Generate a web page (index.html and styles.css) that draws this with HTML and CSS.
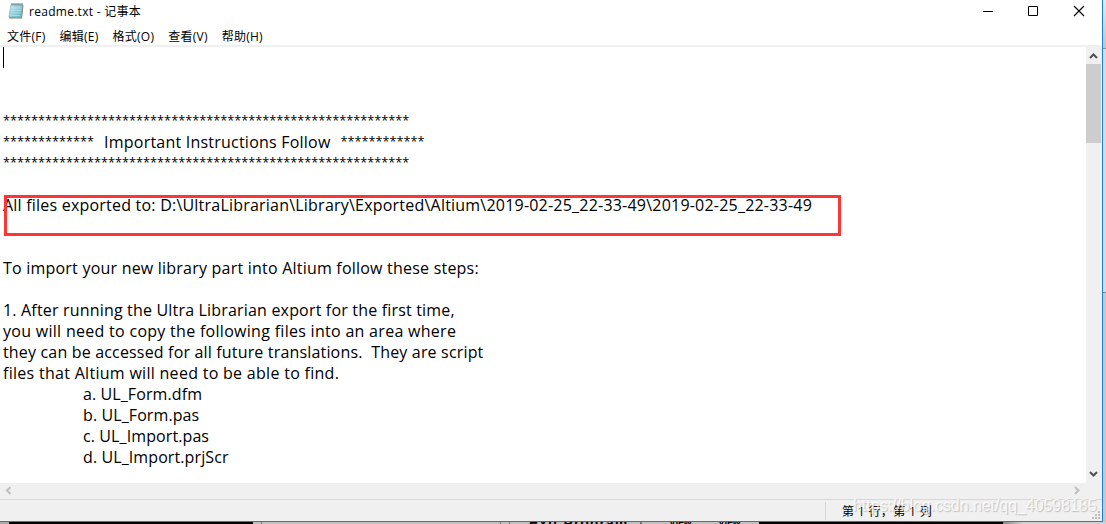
FILE: index.html
```html
<!DOCTYPE html>
<html lang="zh-CN">
<head>
  <meta charset="UTF-8">
  <title>readme.txt - 记事本</title>
  <link rel="stylesheet" href="styles.css">
</head>
<body>
<div class="desktop">
  <div class="window">
    <div class="title-bar">
      <svg class="icon" width="16" height="18" viewBox="0 0 16 18">
        <defs>
          <linearGradient id="paper" x1="0" y1="0" x2="1" y2="1">
            <stop offset="0" stop-color="#c9eef5"/>
            <stop offset="1" stop-color="#56abc0"/>
          </linearGradient>
        </defs>
        <path d="M14 3l1.5.5-1.5 13H1.5L1 15.5z" fill="#8b8067"/>
        <path d="M3 2.5h11.5L13 15.8.8 15z" fill="url(#paper)" stroke="#80b6c3" stroke-width=".6"/>
        <path d="M3.5 6h10M3.2 8.5h10M2.8 11h10M2.4 13.5h10" stroke="#d5f1f5" stroke-width=".5"/>
        <path d="M4 1v2.5M6 1v2.5M8 1v2.5M10 1v2.5M12 1v2.5M14 1v2.5" stroke="#5b6b70" stroke-width=".9"/>
      </svg>
      <span class="title">readme.txt - 记事本</span>
      <div class="controls">
        <svg width="46" height="22"><path d="M11 11.5h10" stroke="#000"/></svg>
        <svg width="46" height="22"><path d="M10.5 6.5h9v9h-9z" fill="none" stroke="#000"/></svg>
        <svg width="46" height="22"><path d="M10 6l10 10M20 6L10 16" stroke="#000" stroke-width="1.1"/></svg>
      </div>
    </div>
    <div class="menu">
      <span class="item">文件(F)</span>
      <span class="item">编辑(E)</span>
      <span class="item">格式(O)</span>
      <span class="item">查看(V)</span>
      <span class="item">帮助(H)</span>
    </div>
    <div class="main">
      <div class="editor">
        <div class="caret"></div>
        <div class="line"></div>
        <div class="line"></div>
        <div class="line"></div>
        <div class="line"><span class="star">**********************************************************</span></div>
        <div class="line"><span class="star">*************</span><span class="heading">Important Instructions Follow</span><span class="star">************</span></div>
        <div class="line"><span class="star">**********************************************************</span></div>
        <div class="line"></div>
        <div class="line path">All files exported to: D:\UltraLibrarian\Library\Exported\Altium\2019-02-25_22-33-49\2019-02-25_22-33-49</div>
        <div class="line"></div>
        <div class="line"></div>
        <div class="line path">To import your new library part into Altium follow these steps:</div>
        <div class="line"></div>
        <div class="line">1. After running the Ultra Librarian export for the first time,</div>
        <div class="line wide">you will need to copy the following files into an area where</div>
        <div class="line narrow">they can be accessed for all future translations.  They are script</div>
        <div class="line wide">files that Altium will need to be able to find.</div>
        <div class="line tab">a. UL_Form.dfm</div>
        <div class="line tab">b. UL_Form.pas</div>
        <div class="line tab">c. UL_Import.pas</div>
        <div class="line tab">d. UL_Import.prjScr</div>
        <div class="mark"></div>
      </div>
      <div class="scroll-y">
        <svg width="15" height="17"><path d="M4 11l3.5-3.5L11 11" fill="none" stroke="#505050" stroke-width="2"/></svg>
        <div class="thumb"></div>
        <svg width="15" height="17"><path d="M4 6l3.5 3.5L11 6" fill="none" stroke="#505050" stroke-width="2"/></svg>
      </div>
    </div>
    <div class="scroll-x">
      <svg width="16" height="16"><path d="M10.5 4L7 7.5l3.5 3.5" fill="none" stroke="#bfbfbf" stroke-width="2"/></svg>
      <svg width="16" height="16"><path d="M5 4l3.5 3.5L5 11" fill="none" stroke="#bfbfbf" stroke-width="2"/></svg>
    </div>
    <div class="status">
      <div class="position">第 1 行，第 1 列</div>
      <svg class="grip" width="9" height="9" fill="#bfbfbf">
        <path d="M6 0h2v2H6zM3 3h2v2H3zM6 3h2v2H6zM0 6h2v2H0zM3 6h2v2H3zM6 6h2v2H6z"/>
      </svg>
    </div>
  </div>
  <div class="side">
    <div class="side-top"></div>
    <div class="side-mid"></div>
    <div class="side-bottom"></div>
  </div>
</div>
<div class="behind">
  <div class="edge"></div>
  <div class="black"></div>
  <div class="gap"></div>
  <div class="panel"></div>
  <div class="panel-slim"></div>
  <div class="button">Exit Program</div>
  <div class="cell">View</div>
  <div class="cell">View</div>
  <div class="black"></div>
  <div class="shade"></div>
</div>
<div class="watermark">https://blog.csdn.net/qq_40598185</div>
</body>
</html>
```
FILE: styles.css
```css
*{
  margin: 0;
  padding: 0;
  box-sizing: border-box;
}
body{
  position: relative;
  width: 1106px;
  height: 524px;
  overflow: hidden;
  background-color: #fff;
  color: #000;
  font-family: "Open Sans", "Noto Sans CJK SC", sans-serif;
}
svg{
  display: block;
}
.desktop{
  display: flex;
  height: 522px;
}
.window{
  display: flex;
  flex-direction: column;
  width: 1103px;
  border-right: 1px solid #1a80d0;
  border-bottom: 1px solid #1a80d0;
}
.title-bar{
  display: flex;
  height: 24px;
  padding-left: 8px;
}
.icon{
  margin-top: 2px;
}
.title{
  margin-left: 5px;
  font-size: 12px;
  line-height: 23px;
  letter-spacing: 0.28px;
}
.controls{
  display: flex;
  margin-left: auto;
  margin-right: -8px;
}
.menu{
  display: flex;
  height: 23px;
  padding-left: 7px;
  border-bottom: 2px solid #f0f0f0;
  font-size: 12px;
  line-height: 25px;
}
.item{
  margin-right: 14px;
  letter-spacing: 0.25px;
}
.main{
  display: flex;
  height: 436px;
}
.editor{
  position: relative;
  flex: 1;
  padding: 1px 0 0 3px;
  overflow: hidden;
  font-size: 16px;
}
.line{
  height: 21px;
  line-height: 20px;
  white-space: pre;
  letter-spacing: 0.18px;
}
.path{
  letter-spacing: 0.215px;
}
.wide{
  letter-spacing: 0.29px;
}
.narrow{
  letter-spacing: 0.17px;
}
.tab{
  padding-left: 80px;
  letter-spacing: 0.1px;
}
.star{
  font-size: 12.72px;
  line-height: 1;
  letter-spacing: 0;
  vertical-align: 2px;
}
.heading{
  margin: 0 10px;
  letter-spacing: 0.22px;
}
.caret{
  position: absolute;
  top: 0;
  left: 3px;
  width: 1px;
  height: 21px;
  background-color: #000;
}
.mark{
  position: absolute;
  top: 148px;
  left: 4px;
  width: 837px;
  height: 41px;
  border: 3px solid #fa3636;
}
.scroll-y{
  display: flex;
  flex-direction: column;
  width: 16px;
  background-color: #f0f0f0;
}
.scroll-y svg:last-child{
  margin-top: auto;
}
.thumb{
  width: 15px;
  height: 79px;
  background-color: #cdcdcd;
}
.scroll-x{
  display: flex;
  justify-content: space-between;
  height: 16px;
  padding-right: 16px;
  background-color: #f0f0f0;
}
.status{
  display: flex;
  justify-content: flex-end;
  height: 22px;
  padding: 2px 1px 1px 0;
  border-top: 1px solid #d7d7d7;
  background-color: #f0f0f0;
}
.position{
  width: 267px;
  padding-left: 16px;
  border-left: 1px solid #d7d7d7;
  font-size: 12px;
  line-height: 19px;
  letter-spacing: 0.35px;
}
.grip{
  align-self: flex-end;
}
.side{
  width: 3px;
}
.side-top{
  height: 49px;
  background: linear-gradient(#e8e8e8, #c4c4c4);
  border-bottom: 1px solid #909090;
}
.side-mid{
  height: 244px;
  background-color: #dadada;
  border-bottom: 1px solid #888;
}
.side-bottom{
  height: 229px;
  background-color: #c8c8c8;
}
.behind{
  display: flex;
  height: 2px;
  overflow: hidden;
  background-color: #c0c0c0;
  font: bold 14px "Liberation Sans", sans-serif;
  line-height: 2px;
}
.edge{
  width: 9px;
  background-color: #aaa;
}
.black{
  width: 244px;
  background-color: #000;
}
.gap{
  width: 9px;
  border-right: 1px solid #777;
}
.panel{
  width: 239px;
  border-right: 1px solid #777;
}
.panel-slim{
  width: 9px;
  border-right: 1px solid #777;
}
.button{
  width: 132px;
  padding-left: 19px;
  border-right: 2px solid #777;
  letter-spacing: 1px;
}
.cell{
  width: 58px;
  padding-left: 27px;
  font-size: 10px;
}
.cell + .cell{
  width: 59px;
  padding-left: 18px;
}
.shade{
  flex: 1;
  background: linear-gradient(to right, #888, #d0d0d0 20px);
}
.watermark{
  position: absolute;
  top: 496px;
  left: 853px;
  font: 16px/20px "Liberation Sans", sans-serif;
  letter-spacing: -0.06px;
  color: rgba(255, 255, 255, 0.75);
  text-shadow: 1px 1px 1px rgba(0, 0, 0, 0.2);
}
```
